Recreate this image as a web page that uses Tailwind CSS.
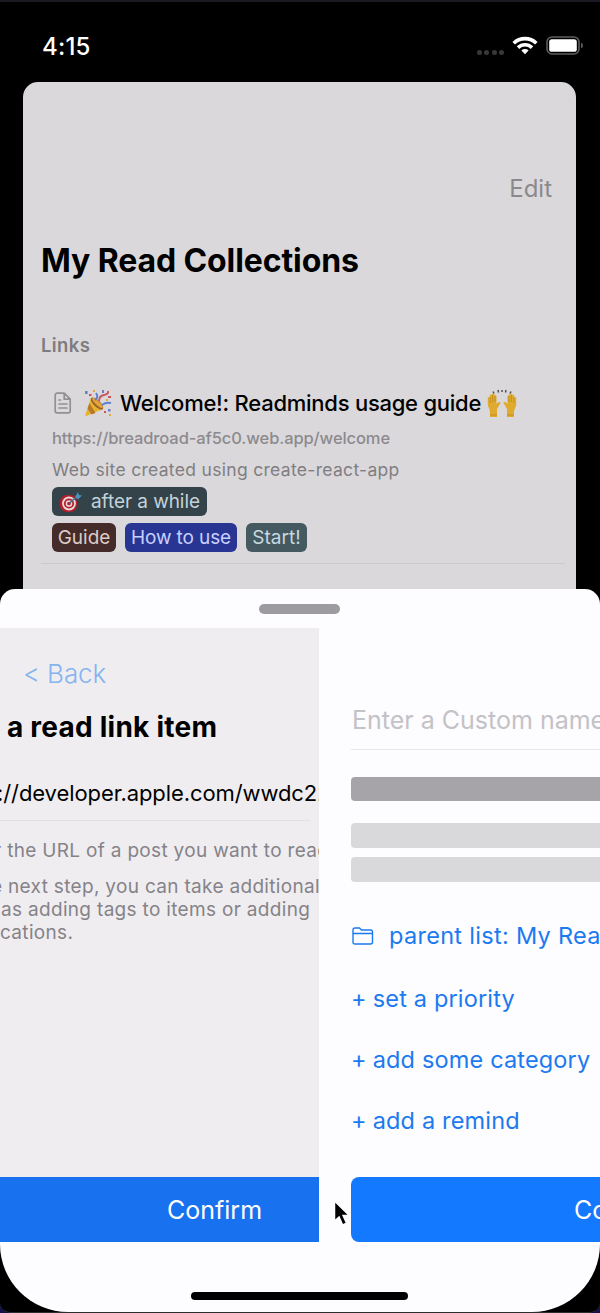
<!DOCTYPE html>
<html lang="en">
<head>
<meta charset="utf-8">
<title>My Read Collections</title>
<script src="https://cdn.jsdelivr.net/npm/@tailwindcss/browser@4"></script>
</head>
<body class="bg-[#14124a] overflow-hidden">
<main class="relative w-[600px] h-[1313px] overflow-hidden bg-black border-t-2 border-t-[#1a1a22] border-b border-b-[#2c2c32] rounded-b-[10px] font-['Inter',sans-serif] whitespace-nowrap flex flex-col">
  <header class="h-20 shrink-0 flex items-start justify-between pl-[42px] pr-[17px] pt-[30px] text-white">
    <span class="text-[24px] leading-[30px] tracking-[0.2px] font-medium">4:15</span>
    <div class="flex items-center h-[27px]">
      <div class="flex gap-[2.5px] mt-[13px] mr-2">
        <i class="size-[5px] rounded-full bg-[#38373a]"></i><i class="size-[5px] rounded-full bg-[#38373a]"></i><i class="size-[5px] rounded-full bg-[#38373a]"></i><i class="size-[5px] rounded-full bg-[#38373a]"></i>
      </div>
      <svg class="w-[26px] h-[19px] mr-[8px]" viewBox="0 0 26 19" fill="none" stroke="#fff" stroke-width="3.6"><path d="M1.7 7.2a16.2 16.2 0 0 1 22.6 0"/><path d="M6 11.6a10 10 0 0 1 14 0"/><path d="M13 18.2l-3.6-3.7a5.2 5.2 0 0 1 7.2 0z" fill="#fff" stroke="none"/></svg>
      <svg class="w-[37px] h-[19px]" viewBox="0 0 37 19"><rect x="1" y="1" width="32" height="17" rx="5" fill="none" stroke="#5d5c60" stroke-width="1.6"/><rect x="3.2" y="3.2" width="27.6" height="12.6" rx="2.6" fill="#fff"/><path d="M35 6.7q2 .8 2 2.8t-2 2.8z" fill="#5d5c60"/></svg>
    </div>
  </header>

  <section class="ml-[23px] w-[553px] h-[507px] shrink-0 rounded-t-[15px] bg-[#dad8db] pl-[18px] pr-[11px] flex flex-col">
    <div class="h-[93px] shrink-0"></div>
    <div class="h-7 shrink-0 flex justify-end pr-[13px] text-[24px] leading-[28px] text-[#8b898d]">Edit</div>
    <h1 class="mt-9 h-11 shrink-0 text-[32px] leading-[44px] tracking-[-0.1px] font-bold">My Read Collections</h1>
    <h2 class="mt-[50px] h-6 shrink-0 text-[18.5px] leading-[24px] tracking-[0.4px] font-semibold text-[#7e7c80]">Links</h2>
    <article class="mt-[30px] ml-[11px] flex flex-col shrink-0">
      <div class="flex items-center h-8">
        <svg class="w-[18px] h-[22px] ml-[2px] shrink-0" viewBox="0 0 18 22" fill="none" stroke="#929094" stroke-width="1.7" stroke-linejoin="round" stroke-linecap="round"><path d="M3 1.2h7.2l6 6V19a1.8 1.8 0 0 1-1.8 1.8H3A1.8 1.8 0 0 1 1.2 19V3A1.8 1.8 0 0 1 3 1.2zM10.2 1.4v5.8h5.8M5 12h8M5 16h8M5 8h1.5"/></svg>
        <svg class="w-[30px] h-[28px] ml-[11px] shrink-0" viewBox="0 0 30 28"><path d="M8 9L2.3 26q-.3 1.3 1 .9L20 20z" fill="#e9b332"/><path d="M6.5 14l6 10-4 1.5-4-6zM9 10l8 11 2-1L8 9z" fill="#b87928"/><ellipse cx="14" cy="14.5" rx="3.3" ry="8" transform="rotate(-47 14 14.5)" fill="#9a6425"/><ellipse cx="14.5" cy="14" rx="2" ry="7" transform="rotate(-47 14.5 14)" fill="#e3a43a"/><path d="M12 11q4-3 1-7M19 16q4-3 9-2" fill="none" stroke="#5b83cf" stroke-width="2"/><path d="M16 12q0-5 5-6t4-4" fill="none" stroke="#c95b5f" stroke-width="2"/><g fill="#6a7fc5"><rect x="2" y="2" width="2.6" height="3"/><rect x="19" y="1" width="2" height="3"/><rect x="25" y="20" width="2.5" height="2.5"/></g><g fill="#d0525b"><rect x="6" y="5" width="2.5" height="2"/><rect x="25" y="7" width="3" height="2"/><rect x="21" y="22" width="2" height="2"/></g><g fill="#e0a93a"><rect x="10" y="1" width="2" height="2"/><rect x="23" y="10" width="2" height="2"/><rect x="26" y="25" width="2" height="2"/></g></svg>
        <span class="ml-[7px] text-[22px] leading-[32px] tracking-[-0.25px] font-medium">Welcome!: Readminds usage guide</span>
        <svg class="w-[30px] h-[30px] mt-px ml-[6px] shrink-0" viewBox="0 0 30 30"><g id="hand"><path d="M3 28V22L.8 16V8.5q1.2-1 2 0V6q1.3-1 2.3 0V5q1.3-1 2.4 0v1.5q1.4-.8 2 .5V15l1.4-1.5q2.4-1 2.6.5L10 20v8z" fill="#dfaa2d"/><path d="M3.2 8v6M5.600 6v7M8 7v6M3 26h7" stroke="#bc8524" stroke-width=".7"/></g><use href="#hand" transform="matrix(-1 0 0 1 30 0)"/><path d="M6 2.5l1 2M11 1l.5 2.5M19 1l-.5 2.5M24 2.5l-1 2M15 1v2" stroke="#55534f" stroke-width="1.5"/></svg>
      </div>
      <p class="h-6 mt-[7px] text-[16.5px] leading-[24px] tracking-[-0.1px] font-medium text-[#8c8a8e]">https://breadroad-af5c0.web.app/welcome</p>
      <p class="h-6 mt-2 text-[17.5px] leading-[24px] tracking-[0.31px] text-[#807e82]">Web site created using create-react-app</p>
      <div class="mt-[5px] h-[29px] w-[155px] rounded-md bg-[#344249] text-[#c3d3da] flex items-center pl-[7px] text-[19px] leading-[28px]">
        <svg class="w-6 h-[22px] mr-2 shrink-0" viewBox="0 0 24 22"><rect x="1" y="4" width="17" height="17" rx="7" fill="#b51f2c"/><circle cx="10" cy="12.5" r="6" fill="none" stroke="#e9d8d8" stroke-width="1.8"/><circle cx="10" cy="12.5" r="2.6" fill="none" stroke="#e9d8d8" stroke-width="1.5"/><path d="M10 12.5l8-7" stroke="#3b6f8d" stroke-width="1.6"/><path d="M16 6l3-5 1 3 3 .5-4 4z" fill="#4b91b8"/></svg>
        <span class="pt-px tracking-[-0.06px]">after a while</span>
      </div>
      <div class="mt-[7px] flex gap-[9px] h-[29px] text-[19px] leading-[29px]">
        <div class="w-16 rounded-md bg-[#452b29] text-[#dccbc7] text-center">Guide</div>
        <div class="w-28 rounded-md bg-[#293593] text-[#c5d0ff] text-center tracking-[-0.1px]">How to use</div>
        <div class="w-[61px] rounded-md bg-[#455960] text-[#c5d8df] text-center">Start!</div>
      </div>
    </article>
    <hr class="mt-[11px] border-[#cccace] shrink-0">
  </section>

  <section class="w-[600px] h-[723px] shrink-0 bg-[#fdfcfe] rounded-t-[15px] rounded-b-[68px] flex flex-col overflow-hidden">
    <div class="h-[39px] shrink-0 flex pl-[259px] pt-[15px]"><div class="w-[81px] h-[10px] rounded-full bg-[#9d9b9f]"></div></div>
    <div class="flex h-[614px] shrink-0">
      <div class="w-[319px] shrink-0 overflow-hidden bg-[#efedf0] flex flex-col">
        <div class="h-[83px] shrink-0 pl-[23px] pt-[30px] text-[26px] leading-[32px] tracking-[-0.1px] font-light text-[#85b4ef]">&lt; Back</div>
        <h2 class="h-8 shrink-0 pl-[7px] text-[28px] leading-[32px] tracking-[0.24px] font-bold">a read link item</h2>
        <p class="mt-[34px] h-8 shrink-0 -ml-[3px] text-[22px] leading-[32px] tracking-[-0.09px]">://developer.apple.com/wwdc22</p>
        <hr class="mt-[11px] mr-[9px] border-[#e2e0e4] shrink-0">
        <div class="mt-[18px] text-[19px] leading-[23px] tracking-[0.32px] text-[#858388] shrink-0">
          <p class="-ml-[6px]">r the URL of a post you want to read</p>
          <p class="mt-[13px] -ml-[9px]">e next step, you can take additional</p>
          <p class="pl-[1px]">as adding tags to items or adding</p>
          <p>cations.</p>
        </div>
        <div class="mt-auto h-[65px] shrink-0 bg-[#1871ee] pl-[167px] text-white text-[25px] leading-[67px]">Confirm</div>
      </div>
      <div class="flex-1 overflow-hidden pl-8 flex flex-col">
        <div class="mt-[76px] h-8 shrink-0 pl-px text-[25px] leading-[32px] text-[#c3c2c7]">Enter a Custom name</div>
        <hr class="mt-[13px] border-[#e8e7ea] shrink-0">
        <div class="mt-[27px] h-6 w-[300px] rounded-[4px] bg-[#a6a4a8] shrink-0"></div>
        <div class="mt-[22px] h-[25px] w-[300px] rounded-[4px] bg-[#d9d8da] shrink-0"></div>
        <div class="mt-[9px] h-[25px] w-[300px] rounded-[4px] bg-[#d9d8da] shrink-0"></div>
        <nav class="mt-[38px] flex flex-col gap-[30px] text-[23.5px] leading-[32px] tracking-[0.16px] text-[#1b7af0]">
          <div class="flex items-center h-8">
            <svg class="w-[22px] h-[18px] ml-[1px] mr-[15px] shrink-0" viewBox="0 0 22 18" fill="none" stroke="#1b7af0" stroke-width="1.4" stroke-linejoin="round"><path d="M1 3q0-2 2-2h4.5l2 2H18.5q2 0 2 2v10q0 2-2 2H3q-2 0-2-2zM1 6.5h19.5"/></svg>
            <span class="tracking-[0.3px]">parent list: My Rea</span>
          </div>
          <div class="flex gap-[6px] leading-[33px] -mb-px"><span>+</span><span>set a priority</span></div>
          <div class="flex gap-[6px]"><span>+</span><span>add some category</span></div>
          <div class="flex gap-[6px] -mt-px"><span>+</span><span>add a remind</span></div>
        </nav>
        <div class="mt-auto h-[65px] w-[540px] shrink-0 rounded-[8px] bg-[#137aff] pl-[223px] text-white text-[25px] leading-[67px]">Confirm</div>
      </div>
    </div>
    <div class="pt-[50px] pl-[191px]"><div class="w-[217px] h-2 rounded-full bg-black"></div></div>
  </section>
  <svg class="absolute left-[332px] top-[1197px] w-[20px] h-[30px]" viewBox="0 0 20 30"><path d="M2.5 2v20l4.6-4 3.5 8 4-1.7-3.5-7.900h6.200z" fill="#000" stroke="#fff" stroke-width="1.5"/></svg>
</main>
</body>
</html>
